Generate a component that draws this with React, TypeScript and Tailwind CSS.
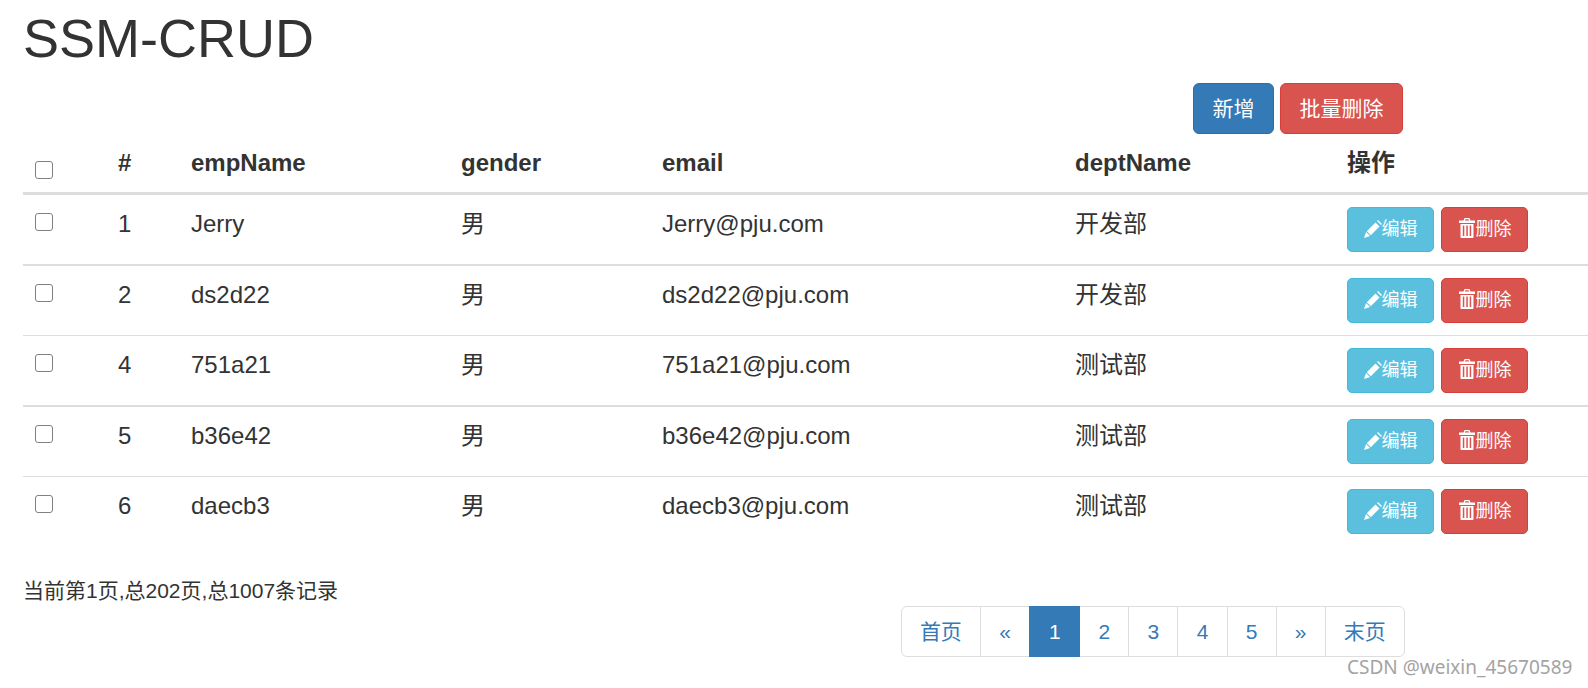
import React from 'react'

const font = "font-['Liberation_Sans','Noto_Sans_CJK_SC',sans-serif]"
const cols = 'grid grid-cols-[83px_73px_270px_201px_413px_272px_1fr] [&>*]:pl-[12px] [&>*]:pt-[12px]'

const rows = [
  { id: 1, name: 'Jerry', email: 'Jerry@pju.com', dept: '开发部', line: 'h-[71px] border-b-2' },
  { id: 2, name: 'ds2d22', email: 'ds2d22@pju.com', dept: '开发部', line: 'h-[70px] border-b' },
  { id: 4, name: '751a21', email: '751a21@pju.com', dept: '测试部', line: 'h-[71px] border-b-2' },
  { id: 5, name: 'b36e42', email: 'b36e42@pju.com', dept: '测试部', line: 'h-[70px] border-b' },
  { id: 6, name: 'daecb3', email: 'daecb3@pju.com', dept: '测试部', line: 'h-[70px]' },
]

const pages = ['首页', '«', '1', '2', '3', '4', '5', '»', '末页']

const PencilIcon = () => (
  <svg viewBox="0 0 20 18" className="w-[20px] h-[18px] -mr-[2px] -mt-[1px] shrink-0" fill="currentColor">
    <path d="M11.500 2.500 15.500 6.500 6.800 15.200 2.800 11.200Z" />
    <path d="M13 1 14 0 18 4 17 5Z" />
    <path d="M2.100 12 6 15.900 0 18Z" />
  </svg>
)

const TrashIcon = () => (
  <svg viewBox="0 0 18 20" className="w-[18px] h-[20px] -mt-[3px] shrink-0" fill="currentColor">
    <path d="M6.500 0h5l1 2.500H17V5H1V2.500h4.500ZM7.300 1.300 6.900 2.500h4.200l-.4-1.200Z" fillRule="evenodd" />
    <path d="M2.500 6h13v13.200q0 .8-.8.8H3.300q-.8 0-.8-.8ZM4.800 7.500v10.500h1.500V7.500ZM8.300 7.500v10.500h1.500V7.500ZM11.700 7.500v10.500h1.500V7.500Z" fillRule="evenodd" />
  </svg>
)

const Check = ({ className }: { className: string }) => (
  <input
    type="checkbox"
    className={`block appearance-none w-[18px] h-[18px] bg-white border-[1.5px] border-[#808080] rounded-[3px] ${className}`}
  />
)

const App = () => {
  return (
    <div className={`w-[1588px] h-[688px] relative overflow-hidden bg-white text-[#333] text-[21px] leading-[30px] pl-[23px] ${font}`}>
      <h1 className="text-[54px] leading-[59px] font-normal pt-[9px] mb-[15px]">SSM-CRUD</h1>

      <div className="w-[1380px] flex justify-end gap-[6px]">
        <button className="h-[51px] px-[18.500px] rounded-[6px] border border-[#2e6da4] bg-[#337ab7] text-white">新增</button>
        <button className="h-[51px] px-[18.500px] rounded-[6px] border border-[#d43f3a] bg-[#d9534f] text-white">批量删除</button>
      </div>

      <div className="w-[1565px] text-[24px] leading-[34px]">
        <div className={`${cols} h-[61px] border-b-[3px] border-[#ddd] font-bold`}>
          <div><Check className="mt-[15px]" /></div>
          <div>#</div>
          <div>empName</div>
          <div>gender</div>
          <div>email</div>
          <div>deptName</div>
          <div>操作</div>
        </div>
        {rows.map((r) => (
          <div key={r.id} className={`${cols} border-[#ddd] ${r.line}`}>
            <div><Check className="mt-[6px]" /></div>
            <div>{r.id}</div>
            <div>{r.name}</div>
            <div>男</div>
            <div>{r.email}</div>
            <div>{r.dept}</div>
            <div className="flex gap-[7px] text-[18px] leading-[27px]">
              <button className="w-[87px] h-[45px] flex items-center justify-center rounded-[5px] border border-[#46b8da] bg-[#5bc0de] text-white">
                <PencilIcon />
                编辑
              </button>
              <button className="w-[87px] h-[45px] flex items-center justify-center rounded-[5px] border border-[#d43f3a] bg-[#d9534f] text-white">
                <TrashIcon />
                删除
              </button>
            </div>
          </div>
        ))}
      </div>

      <div className="mt-[29px]">当前第1页,总202页,总1007条记录</div>

      <div className="w-[1382px] flex justify-end">
        <ul className="flex h-[51px] rounded-[6px] border border-[#ddd] text-[#337ab7]">
          {pages.map((p, i) => (
            <li
              key={p}
              className={`flex items-center ${p === '1' ? 'px-[18.750px]' : 'px-[18.200px]'} ${i > 0 && p !== '2' ? 'border-l border-[#ddd]' : ''} ${p === '1' ? '-my-px bg-[#337ab7] text-white border-x border-x-[#337ab7]' : ''}`}
            >
              {p}
            </li>
          ))}
        </ul>
      </div>

      <div className="absolute left-[1347px] top-[655px] text-[19px] leading-[24px] text-[#a3a3a3] font-['Noto_Sans',sans-serif]">
        CSDN @weixin_45670589
      </div>
    </div>
  )
}

export default App
